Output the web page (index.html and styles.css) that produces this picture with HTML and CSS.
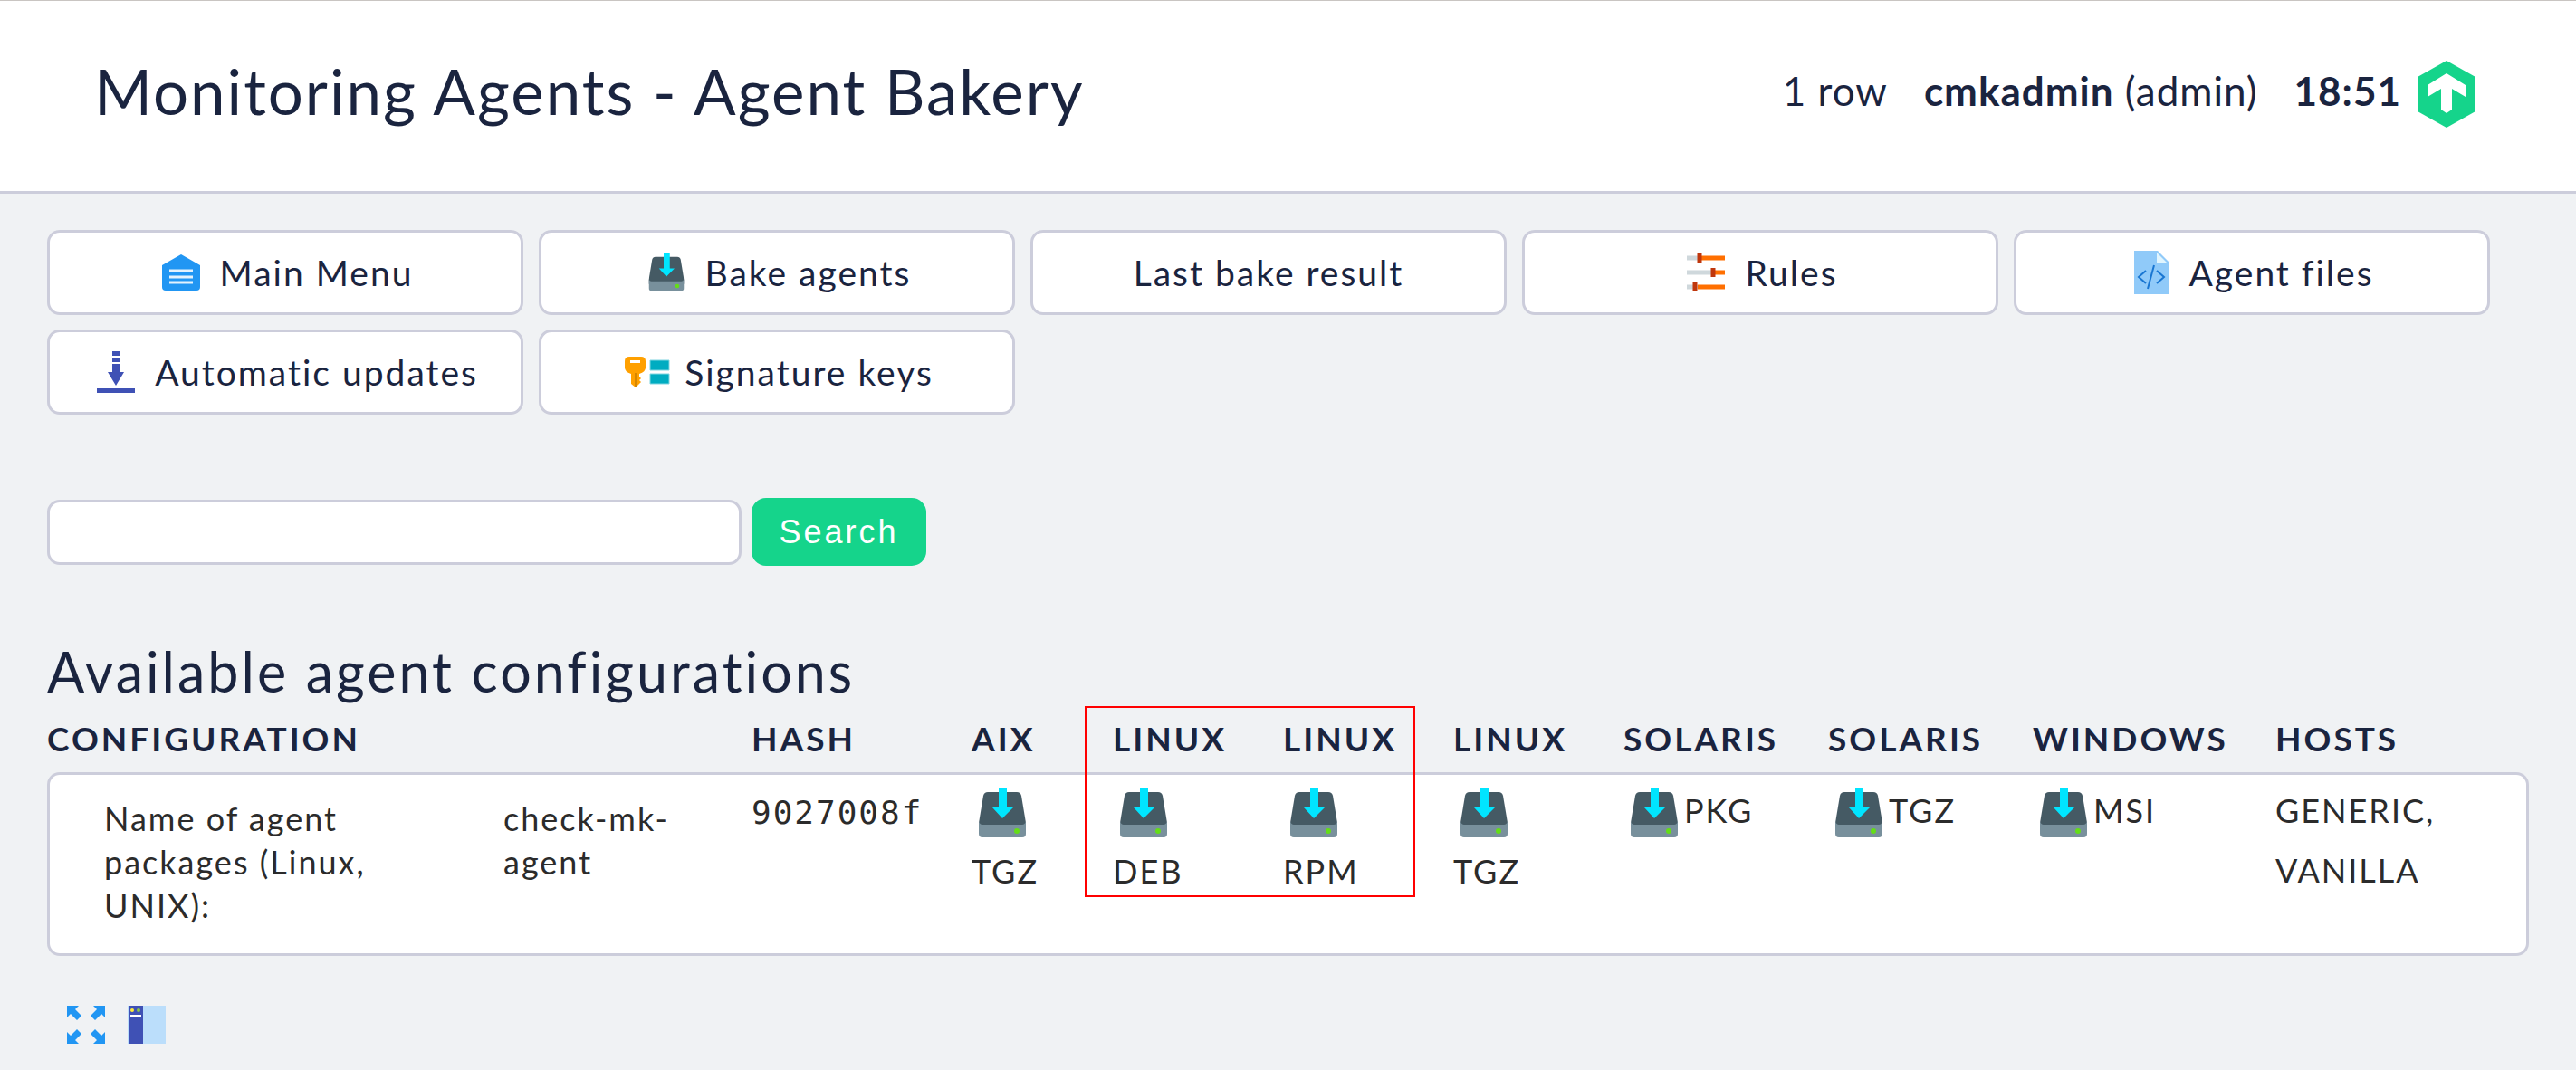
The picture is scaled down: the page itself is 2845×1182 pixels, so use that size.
FILE: index.html
```html
<!DOCTYPE html>
<html lang="en">
<head>
<meta charset="utf-8">
<title>Monitoring Agents - Agent Bakery</title>
<link rel="stylesheet" href="styles.css">
</head>
<body>
<svg class="sprite" width="0" height="0" aria-hidden="true">
  <symbol id="disk" viewBox="0 0 52 56">
    <path fill="#455a64" d="M10 5h32q4 0 5 4l5 30v6H0v-6L5 9q1-4 5-4z"/>
    <path fill="#78909c" d="M0 37q1 4 4 4h44q3 0 4-4v14q0 4-4 4H4q-4 0-4-4z"/>
    <circle fill="#64dd17" cx="42" cy="48" r="3"/>
    <path fill="#00e5ff" d="M22 0h9v22h7L26 34 15 22h7z"/>
  </symbol>
</svg>
<header class="top">
  <h1 class="title">Monitoring Agents - Agent Bakery</h1>
  <div class="status">
    <span>1 row</span>
    <span><b>cmkadmin</b> (admin)</span>
    <span class="clock"><b>18:51</b>
      <svg class="logo" viewBox="0 0 64 74"><path fill="#15d48b" d="M32 0l32 18v38L32 74 0 56V18z"/><path fill="#fff" d="M32 14l21 13v13l-15-9v23l-6 4-6-4V31l-15 9V27z"/></svg>
    </span>
  </div>
</header>
<main class="content">
  <nav class="actions">
    <a class="action" href="#"><svg class="icon" viewBox="0 0 42 42"><path fill="#2196f3" d="M21 1l21 12v24q0 4-4 4H4q-4 0-4-4V13z"/><path stroke="#e3f2fd" stroke-width="3" d="M8 19h26M8 26h26M8 32h26"/></svg>Main Menu</a>
    <a class="action" href="#"><svg class="icon" viewBox="0 0 52 56"><use href="#disk"/></svg>Bake agents</a>
    <a class="action" href="#">Last bake result</a>
    <a class="action" href="#"><svg class="icon" viewBox="0 0 42 42"><path stroke="#cfd8dc" stroke-width="5" d="M0 5h16M0 21h30M0 37h12"/><path stroke="#ff6f00" stroke-width="5" d="M16 5h26M30 21h12M12 37h30"/><path stroke="#bf360c" stroke-width="5" d="M14 0v10M29 16v10M9 32v10"/></svg>Rules</a>
    <a class="action" href="#"><svg class="icon file" viewBox="0 0 38 48"><path fill="#90caf9" d="M0 0h26l12 12v36H0z"/><path fill="#e1f5fe" d="M25 2v12h12z"/><path fill="none" stroke="#1976d2" stroke-width="2" d="M13 22l-8 7 8 7M25 22l8 7-8 7M22 16l-7 26"/></svg>Agent files</a>
    <a class="action" href="#"><svg class="icon tall" viewBox="0 0 42 46"><path fill="#3f51b5" d="M17 0h8v5h-8zM17 7h8v5h-8zM17 14h8v9h5L21 38 12 23h5zM0 41h42v5H0z"/></svg>Automatic updates</a>
    <a class="action" href="#"><svg class="icon wide" viewBox="0 0 50 34"><path fill="#ffa000" d="M5 0h13q5 0 5 5v7q0 5-7 7v3l2 2-2 2 2 2-2 2-4 4-5-4V19Q0 17 0 12V5q0-5 5-5z"/><path fill="#fff" d="M6 4h11v3H6z"/><path fill="#d68600" d="M11 18h2v15h-2z"/><path fill="#00acc1" stroke="#80d5e0" stroke-width="1" d="M28 4h21v11H28zM28 19h21v11H28z"/></svg>Signature keys</a>
  </nav>
  <form class="search">
    <input class="field" type="text" aria-label="Search agents">
    <button class="submit" type="button">Search</button>
  </form>
  <h2 class="heading">Available agent configurations</h2>
  <table class="agents">
    <colgroup><col class="c-config"><col class="c-hash"><col class="c-aix"><col class="c-linux"><col class="c-linux"><col class="c-linux"><col class="c-solaris"><col class="c-solaris"><col class="c-windows"><col></colgroup>
    <thead>
      <tr><th>Configuration</th><th>Hash</th><th>AIX</th><th class="marked">Linux<span class="mark"></span></th><th>Linux</th><th>Linux</th><th>Solaris</th><th>Solaris</th><th>Windows</th><th>Hosts</th></tr>
    </thead>
    <tbody>
      <tr>
        <td><dl class="config"><dt>Name of agent packages (Linux, UNIX):</dt><dd>check-mk-agent</dd></dl></td>
        <td class="hash">9027008f</td>
        <td><a class="pack stacked" href="#"><svg class="disk"><use href="#disk"/></svg>TGZ</a></td>
        <td><a class="pack stacked" href="#"><svg class="disk"><use href="#disk"/></svg>DEB</a></td>
        <td><a class="pack stacked" href="#"><svg class="disk"><use href="#disk"/></svg>RPM</a></td>
        <td><a class="pack stacked" href="#"><svg class="disk"><use href="#disk"/></svg>TGZ</a></td>
        <td><a class="pack" href="#"><svg class="disk"><use href="#disk"/></svg>PKG</a></td>
        <td><a class="pack" href="#"><svg class="disk"><use href="#disk"/></svg>TGZ</a></td>
        <td><a class="pack" href="#"><svg class="disk"><use href="#disk"/></svg>MSI</a></td>
        <td>GENERIC, VANILLA</td>
      </tr>
    </tbody>
  </table>
</main>
<footer class="tools">
  <button class="tool" type="button" aria-label="Full screen"><svg class="icon" viewBox="0 0 42 42"><path fill="#2196f3" d="M0 0h13L9 4l7 7-5 5-7-7-4 4zM42 0v13l-4-4-7 7-5-5 7-7-4-4zM0 42V29l4 4 7-7 5 5-7 7 4 4zM42 42H29l4-4-7-7 5-5 7 7 4-4z"/></svg></button>
  <button class="tool" type="button" aria-label="Toggle sidebar"><svg class="icon" viewBox="0 0 42 42"><path fill="#bbdefb" d="M0 0h42v42H0z"/><path fill="#3f51b5" d="M1 0h16v42H1z"/><circle fill="#ffeb3b" cx="5" cy="5" r="2"/><circle fill="#8bc34a" cx="12" cy="5" r="2"/><path fill="#fff" d="M3 10h12v2H3z"/></svg></button>
</footer>
</body>
</html>
```
FILE: styles.css
```css
* { box-sizing: border-box; }
body {
  margin: 0;
  background: #f0f2f4;
  color: #1a243f;
  font-family: Lato, sans-serif;
  font-size: 36px;
  letter-spacing: 1px;
}
a { color: inherit; text-decoration: none; }
svg { display: block; flex: none; }
.sprite { position: absolute; }

.top {
  display: flex;
  align-items: center;
  justify-content: space-between;
  height: 214px;
  padding: 0 111px 12px 104px;
  background: #fff;
  border-top: 1px solid #c9c5c2;
  border-bottom: 3px solid #cccddb;
}
.title { margin: 0; font-size: 69px; font-weight: 400; letter-spacing: 2px; }
.status { display: flex; align-items: center; gap: 40px; font-size: 44px; }
.clock { display: flex; align-items: center; gap: 18px; }
.logo { width: 64px; height: 74px; margin-top: 8px; }

.content { padding: 40px 52px 0; }
.actions { display: flex; flex-wrap: wrap; gap: 16px 17px; }
.action {
  display: flex;
  align-items: center;
  justify-content: center;
  width: 526px;
  height: 94px;
  background: #fff;
  border: 3px solid #cccddb;
  border-radius: 14px;
  font-size: 39px;
  letter-spacing: 2px;
}
.icon { width: 42px; height: 42px; }
.action .icon { margin: 0 22px 0 5px; }
.icon.file { width: 38px; height: 48px; }
.icon.tall { height: 46px; }
.action .wide { width: 50px; height: 34px; margin-right: 16px; }

.search { display: flex; align-items: center; gap: 11px; margin-top: 92px; }
.field {
  width: 767px;
  height: 72px;
  border: 3px solid #cccddb;
  border-radius: 14px;
  background: #fff;
  font: inherit;
}
.submit {
  width: 193px;
  height: 75px;
  border: 0;
  border-radius: 16px;
  background: #15d48b;
  color: #fff;
  font: 36px "Liberation Sans", sans-serif;
  letter-spacing: 3px;
}
.heading { margin: 79px 0 0; font-size: 61px; line-height: 76px; font-weight: 400; letter-spacing: 3px; }

.agents { width: 100%; table-layout: fixed; border-spacing: 0; }
.c-config { width: 778px; }
.c-hash { width: 243px; }
.c-aix { width: 156px; }
.c-linux { width: 188px; }
.c-solaris { width: 226px; }
.c-windows { width: 268px; }
.agents th {
  height: 73px;
  padding: 0 0 3px;
  text-align: left;
  text-transform: uppercase;
  font-size: 37px;
  letter-spacing: 3px;
}
.agents td {
  height: 203px;
  padding: 6px 0 0;
  vertical-align: top;
  background: #fff;
  border: solid #cccddb;
  border-width: 3px 0;
  color: #2b2b2b;
  letter-spacing: 2px;
  line-height: 66px;
}
.agents td:first-child { padding-left: 60px; border-left-width: 3px; border-radius: 14px 0 0 14px; }
.agents td:last-child { border-right-width: 3px; border-radius: 0 14px 14px 0; padding-right: 90px; }
.config { display: grid; grid-template-columns: 300px 190px; gap: 141px; margin: 0; padding-top: 18px; line-height: 48px; }
.config dd { margin: 0; }
.agents .hash { padding-top: 9px; font-family: "DejaVu Sans Mono", monospace; }
.pack { display: flex; gap: 7px; padding-left: 8px; }
.stacked { flex-direction: column; gap: 3px; padding: 0; }
.disk { width: 52px; height: 56px; margin-top: 8px; }
.stacked .disk { margin-left: 8px; }
.marked { position: relative; }
.mark { position: absolute; left: -31px; top: 0; width: 365px; height: 211px; border: 2px solid #f00; }

.tools { display: flex; gap: 25px; padding: 55px 74px 20px; }
.tool { padding: 0; border: 0; background: none; }
```
